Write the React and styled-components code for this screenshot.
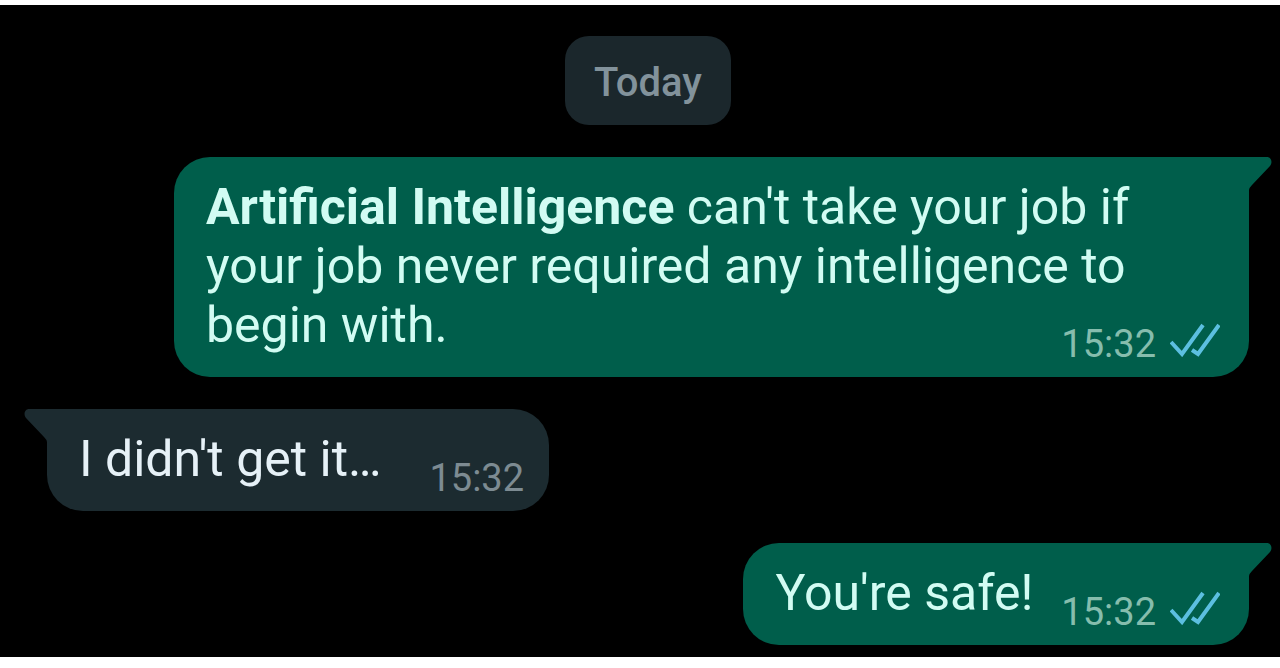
import React from 'react'
import styled, { createGlobalStyle, css } from 'styled-components'

const GlobalStyle = createGlobalStyle`
  body {
    margin: 0;
    background-color: white;
    font-family: Roboto, 'Liberation Sans', sans-serif;
  }
`
const Chat = styled.main`
  display: flex;
  flex-direction: column;
  gap: 32px;
  margin: 5px 0 11px;
  padding: 31px 31px 12px 47px;
  background-color: black;
`
const Day = styled.div`
  align-self: center;
  padding: 23px 29px 18px;
  border-radius: 24px;
  background-color: #1b272c;
  color: #82929b;
  font-size: 40px;
  font-weight: 500;
  line-height: 48px;
`
const incoming = css`
  align-self: flex-start;
  border-radius: 0 36px 36px 36px;
  padding-right: 25px;
  background-color: #1c2b30;
  color: #e6f1f7;
`
const outgoing = css`
  align-self: flex-end;
  border-radius: 36px 0 36px 36px;
  padding-right: 29px;
  background-color: #005e4b;
  color: #d2fcf3;
`
const Bubble = styled.article`
  position: relative;
  box-sizing: border-box;
  max-width: calc(100% - 127px);
  padding: 21px 0 17px 32px;
  ${({ $mine }) => ($mine ? outgoing : incoming)}
`
const Text = styled.p`
  margin: 0;
  font-size: 50px;
  line-height: 59px;
`
const Meta = styled.span`
  float: right;
  display: flex;
  align-items: flex-start;
  gap: 14px;
  height: 37px;
  margin: 27px 0 0 ${({ $mine }) => ($mine ? '28px' : '48px')};
  color: ${({ $mine }) => ($mine ? '#86bdad' : '#7d8b92')};
  font-size: 38px;
  line-height: 42px;
`
const TailIcon = styled.svg`
  position: absolute;
  top: 0;
  width: 23px;
  height: 33px;
  fill: ${({ $mine }) => ($mine ? '#005e4b' : '#1c2b30')};
  ${({ $mine }) => ($mine ? 'left: 100%;' : 'right: 100%; transform: scaleX(-1);')}
`
const TicksIcon = styled.svg`
  width: 50px;
  height: 34px;
  fill: none;
  stroke: #5cbfe0;
  stroke-width: 4;
`

function Tail({ mine }) {
  return (
    <TailIcon $mine={mine} viewBox="0 0 23 33" aria-hidden="true">
      <path d="M0 0H18C22 0 24 5 21 9L3 28Q0 31 0 33Z" />
    </TailIcon>
  )
}

function Ticks() {
  return (
    <TicksIcon viewBox="0 0 50 34" role="img" aria-label="Read">
      <path d="M1 19L12 31L33 2" />
      <path d="M22 27L28 31L49 2" />
    </TicksIcon>
  )
}

function Message({ mine, time, children }) {
  return (
    <Bubble $mine={mine}>
      <Tail mine={mine} />
      <Text>
        {children}
        <Meta $mine={mine}>
          <time>{time}</time>
          {mine && <Ticks />}
        </Meta>
      </Text>
    </Bubble>
  )
}

export default function App() {
  return (
    <>
      <GlobalStyle />
      <Chat>
        <Day>Today</Day>
        <Message mine time="15:32">
          <b>Artificial Intelligence</b> can't take your job if your job never
          required any intelligence to begin with.
        </Message>
        <Message time="15:32">I didn't get it…</Message>
        <Message mine time="15:32">You're safe!</Message>
      </Chat>
    </>
  )
}
